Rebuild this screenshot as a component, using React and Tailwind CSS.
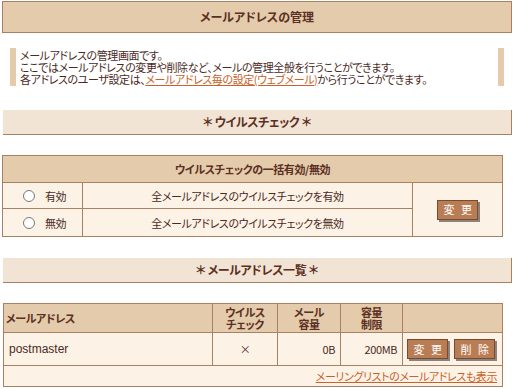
const Btn = ({ a, b }) => (
  <button className="w-[41px] h-[20px] shrink-0 flex items-center justify-center gap-[7px] bg-[#b97d55] border border-[#7a4a2c] text-white text-[11px] leading-none shadow-[2px_2px_0_#8c8279]">
    <span>{a}</span>
    <span>{b}</span>
  </button>
);

const SectionHead = ({ children, className = "" }) => (
  <div
    className={`ml-[3px] w-[509px] h-[25px] bg-[#f1e4d5] border-r border-b border-[#a88062] flex items-center justify-center font-bold text-[12px] text-[#5b2f22] ${className}`}
  >
    {children}
  </div>
);

const cell = "border border-[#a88062]";

export default function App() {
  return (
    <div
      className="w-[514px] h-[389px] bg-white text-[11px] tracking-[-0.4px] leading-[12px] text-[#4a2a1e] overflow-hidden pt-[1px] [font-feature-settings:'palt']"
      style={{ fontFamily: '"Noto Sans CJK JP", "Liberation Sans", sans-serif' }}
    >
      <div className="ml-[2px] w-[510px] h-[32px] bg-[#e3cbab] border border-[#a88062] flex items-center justify-center font-bold text-[12px] tracking-normal text-[#5b2f22]">
        メールアドレスの管理
      </div>

      <div className="mt-[15px] ml-[10px] w-[494px] h-[38px] border-l-[6px] border-r-[6px] border-[#e3cbab] pl-[4px] pt-[1px] leading-[12px] whitespace-nowrap">
        <p>メールアドレスの管理画面です。</p>
        <p>ここではメールアドレスの変更や削除など、メールの管理全般を行うことができます。</p>
        <p>
          各アドレスのユーザ設定は、
          <a href="#" className="text-[#c9622a] underline">
            メールアドレス毎の設定(ウェブメール)
          </a>
          から行うことができます。
        </p>
      </div>

      <SectionHead className="mt-[24px]">＊ ウイルスチェック ＊</SectionHead>

      <table className="mt-[20px] ml-[2px] w-[501px] border-collapse">
        <tbody>
          <tr className="h-[27px] bg-[#e3cbab]">
            <th colSpan={3} className={`${cell} font-bold text-[#5b2f22]`}>
              ウイルスチェックの一括有効/無効
            </th>
          </tr>
          <tr className="h-[26px] bg-[#fdf2e6]">
            <td className={`${cell} w-[80px]`}>
              <label className="flex items-center pl-[20px] gap-[10px]">
                <input type="radio" name="vc" className="w-[12px] h-[12px] m-0" />
                有効
              </label>
            </td>
            <td className={`${cell} text-center`}>全メールアドレスのウイルスチェックを有効</td>
            <td rowSpan={2} className={`${cell} w-[90px]`}>
              <div className="flex justify-center">
                <Btn a="変" b="更" />
              </div>
            </td>
          </tr>
          <tr className="h-[28px] bg-[#fdf2e6]">
            <td className={cell}>
              <label className="flex items-center pl-[20px] gap-[10px]">
                <input type="radio" name="vc" className="w-[12px] h-[12px] m-0" />
                無効
              </label>
            </td>
            <td className={`${cell} text-center`}>全メールアドレスのウイルスチェックを無効</td>
          </tr>
        </tbody>
      </table>

      <SectionHead className="mt-[21px]">＊ メールアドレス一覧 ＊</SectionHead>

      <table className="mt-[20px] ml-[3px] w-[500px] border-collapse table-fixed">
        <tbody>
          <tr className="h-[29px] bg-[#e3cbab] font-bold text-[#5b2f22] leading-[12px]">
            <th className={`${cell} text-left pl-[2px] w-[209px]`}>メールアドレス</th>
            <th className={`${cell} w-[65px]`}>ウイルス<br />チェック</th>
            <th className={`${cell} w-[63px]`}>メール<br />容量</th>
            <th className={`${cell} w-[62px]`}>容量<br />制限</th>
            <th className={cell}></th>
          </tr>
          <tr className="h-[33px] bg-[#fdf2e6]">
            <td className={`${cell} pl-[5px] text-[12px] tracking-normal`} style={{ fontFamily: '"Liberation Sans", sans-serif' }}>
              postmaster
            </td>
            <td className={`${cell} text-center`}>×</td>
            <td className={`${cell} text-right pr-[5px]`}>0B</td>
            <td className={`${cell} text-right pr-[5px]`}>200MB</td>
            <td className={cell}>
              <div className="flex gap-[6px] pl-[4px]">
                <Btn a="変" b="更" />
                <Btn a="削" b="除" />
              </div>
            </td>
          </tr>
          <tr className="h-[21px] bg-[#fdf2e6]">
            <td colSpan={5} className={`${cell} text-right pr-[5px]`}>
              <a href="#" className="text-[#c9622a] underline">
                メーリングリストのメールアドレスも表示
              </a>
            </td>
          </tr>
        </tbody>
      </table>
    </div>
  );
}
